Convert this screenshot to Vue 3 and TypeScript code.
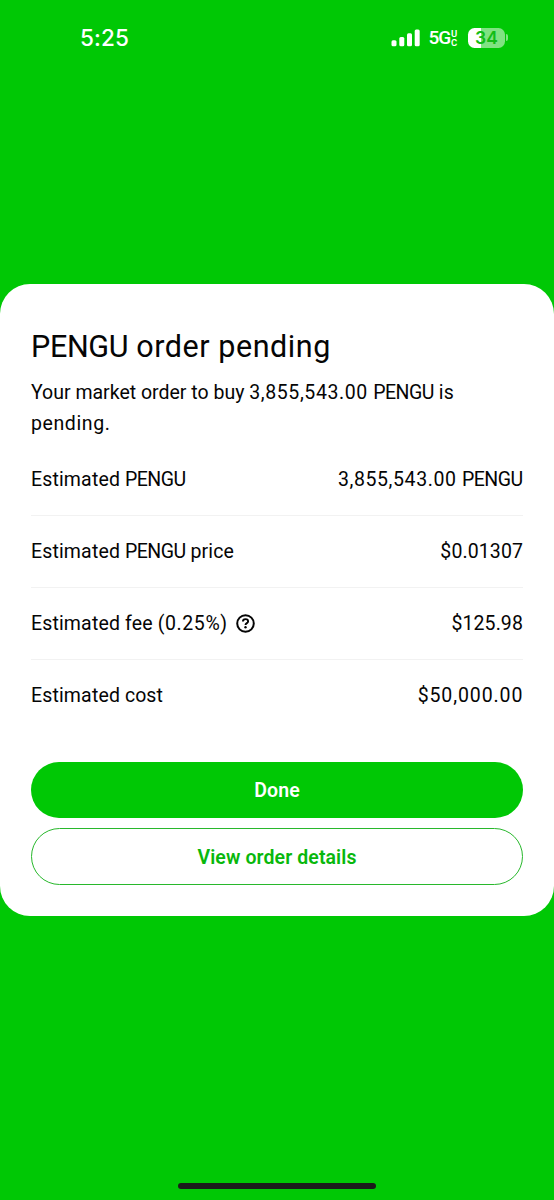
<script setup lang="ts">
type Tone = 'word' | 'ticker' | 'tail' | 'number' | 'rate' | 'price' | 'total'

interface Segment {
  text: string
  tone: Tone
}

interface Row {
  id: string
  label: Segment[]
  value: Segment[]
  help?: boolean
}

const summary: Segment[] = [
  { text: 'Your market order to buy ', tone: 'tail' },
  { text: '3,855,543.00 ', tone: 'number' },
  { text: 'PENGU', tone: 'ticker' },
  { text: ' is', tone: 'word' },
]

const rows: Row[] = [
  {
    id: 'amount',
    label: [{ text: 'Estimated ', tone: 'word' }, { text: 'PENGU', tone: 'ticker' }],
    value: [{ text: '3,855,543.00 ', tone: 'number' }, { text: 'PENGU', tone: 'ticker' }],
  },
  {
    id: 'price',
    label: [{ text: 'Estimated ', tone: 'word' }, { text: 'PENGU', tone: 'ticker' }, { text: ' price', tone: 'word' }],
    value: [{ text: '$0.01307', tone: 'price' }],
  },
  {
    id: 'fee',
    label: [{ text: 'Estimated fee ', tone: 'word' }, { text: '(0.25%)', tone: 'rate' }],
    value: [{ text: '$125.98', tone: 'price' }],
    help: true,
  },
  {
    id: 'cost',
    label: [{ text: 'Estimated ', tone: 'word' }, { text: 'cost', tone: 'tail' }],
    value: [{ text: '$50,000.00', tone: 'total' }],
  },
]
</script>

<template>
  <div class="screen">
    <header class="status">
      <span class="time">5:25</span>
      <div class="indicators">
        <svg class="signal" width="29" height="18" viewBox="0 0 29 18" fill="#fff">
          <rect x="0.5" y="11.3" width="5" height="6" rx="1.5" />
          <rect x="8.3" y="8" width="5" height="9.3" rx="1.5" />
          <rect x="16" y="4.2" width="5" height="13.1" rx="1.5" />
          <rect x="23.7" y="0.4" width="5" height="16.9" rx="1.5" />
        </svg>
        <span class="network">5G</span>
        <span class="uc"><span>U</span><span>C</span></span>
        <div class="battery"><span>34</span></div>
        <i class="nub"></i>
      </div>
    </header>

    <main class="card">
      <h1><span class="symbol">PENGU</span> order pending</h1>
      <p class="desc">
        <span v-for="(part, i) in summary" :key="i" :class="part.tone">{{ part.text }}</span>
        <br /><span class="rate">pending.</span>
      </p>
      <dl>
        <div v-for="row in rows" :key="row.id" class="row">
          <dt>
            <span v-for="(part, i) in row.label" :key="i" :class="part.tone">{{ part.text }}</span>
            <svg v-if="row.help" class="help" width="19" height="19" viewBox="0 0 19 19" fill="none" stroke="#050505">
              <circle cx="9.5" cy="9.5" r="8.3" stroke-width="2" />
              <path d="M6.9 7.6C6.9 6 8 5.1 9.5 5.1S12.1 6 12.1 7.4C12.1 9.2 9.5 9.1 9.5 11.1" stroke-width="1.9" />
              <circle cx="9.5" cy="13.2" r="1.2" fill="#050505" stroke="none" />
            </svg>
          </dt>
          <dd>
            <span v-for="(part, i) in row.value" :key="i" :class="part.tone">{{ part.text }}</span>
          </dd>
        </div>
      </dl>
      <button class="primary" type="button"><span>Done</span></button>
      <button class="secondary" type="button"><span>View order details</span></button>
    </main>
    <div class="home"></div>
  </div>
</template>

<style>
body {
  margin: 0;
  background: #00c805;
}
</style>

<style scoped>
.screen {
  box-sizing: border-box;
  width: 554px;
  height: 1200px;
  display: flex;
  flex-direction: column;
  background: #00c805;
  font-family: Roboto, "Liberation Sans", sans-serif;
  color: #050505;
  overflow: hidden;
}
.status {
  box-sizing: border-box;
  height: 284px;
  padding: 25px 46px 0 80px;
  display: flex;
  justify-content: space-between;
  align-items: flex-start;
  color: #fff;
}
.time {
  font: 500 22.5px/26px Inter, sans-serif;
  letter-spacing: 0.1px;
}
.indicators {
  display: flex;
  align-items: center;
  height: 25px;
}
.signal {
  display: block;
}
.network {
  margin-left: 9px;
  font-size: 19px;
  font-weight: 500;
  line-height: 26px;
  padding-top: 1px;
  width: 22.5px;
  letter-spacing: -1px;
}
.uc {
  display: flex;
  flex-direction: column;
  width: 8px;
  padding-top: 1px;
  font-size: 9.5px;
  line-height: 9px;
  font-weight: 600;
}
.battery {
  width: 37px;
  height: 20px;
  margin-left: 9px;
  border-radius: 6.5px;
  background: linear-gradient(90deg, #fff 13px, #80e382 13px);
  text-align: center;
  color: #12bd16;
  font: 600 17.5px/20px Inter, sans-serif;
}
.nub {
  width: 2px;
  height: 7px;
  margin-left: 1px;
  border-radius: 0 2px 2px 0;
  background: #80e382;
}
.card {
  box-sizing: border-box;
  height: 632px;
  padding: 43px 31px 0;
  border-radius: 30px;
  background: #fff;
}
h1 {
  margin: 0;
  font-size: 30.5px;
  line-height: 40px;
  font-weight: 400;
  letter-spacing: 0.55px;
  white-space: nowrap;
}
.symbol {
  letter-spacing: -0.35px;
}
.desc {
  margin: 10px 0 0;
  font-size: 19.5px;
  line-height: 31px;
  white-space: nowrap;
}
.desc span,
dt span,
dd span {
  white-space: pre;
}
.word {
  letter-spacing: 0.15px;
}
.tail {
  letter-spacing: 0;
}
.ticker {
  letter-spacing: -0.55px;
}
dd .ticker {
  margin-right: 0.5px;
}
.number {
  letter-spacing: 0.6px;
}
.rate {
  letter-spacing: 0.6px;
}
.price {
  letter-spacing: 0.1px;
}
.total {
  letter-spacing: 0.9px;
  margin-right: -0.3px;
}
dl {
  margin: 5px 0 0;
}
.row {
  box-sizing: border-box;
  height: 72px;
  display: flex;
  align-items: center;
  justify-content: space-between;
  border-bottom: 1px solid #f2f2f2;
  font-size: 19.5px;
}
.row:last-child {
  border-bottom-color: transparent;
}
dt,
dd {
  display: flex;
  align-items: center;
}
dd {
  margin: 0;
}
.help {
  margin-left: 8px;
  margin-top: -1px;
}
button {
  box-sizing: border-box;
  display: flex;
  align-items: center;
  justify-content: center;
  width: 492px;
  padding: 2px 0 0;
  border: 0;
  font: 600 19.5px/24px Roboto, sans-serif;
  letter-spacing: 0.1px;
}
.primary {
  height: 56px;
  margin-top: 30px;
  border-radius: 28px;
  background: #00c805;
  color: #fff;
}
.secondary {
  height: 57px;
  margin-top: 10px;
  border: 1px solid #28b82c;
  border-radius: 28.5px;
  background: #fff;
  color: #08b80c;
}
.home {
  width: 198px;
  height: 6px;
  margin: 267px 0 0 178px;
  border-radius: 3px;
  background: #1b1b1b;
}
</style>
